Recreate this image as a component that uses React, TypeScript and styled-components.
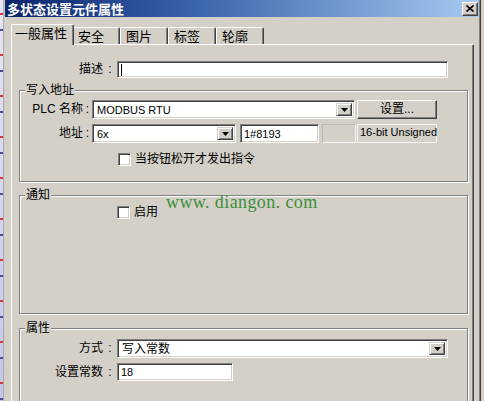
import React from "react";
import styled, { createGlobalStyle, css } from "styled-components";

const GlobalStyle = createGlobalStyle`
  html, body { margin: 0; padding: 0; background: #d4d0c8; }
  body {
    font-family: "Liberation Sans", "Noto Sans CJK SC", sans-serif;
    font-size: 12px;
    color: #000;
    overflow: hidden;
  }
  *, *::before, *::after { box-sizing: border-box; }
`;

const sunken = css`
  background: #fff;
  border: 1px solid;
  border-color: #808080 #fff #fff #808080;
  box-shadow: inset 1px 1px 0 #404040, inset -1px -1px 0 #d4d0c8;
`;

const raised = css`
  background: #d4d0c8;
  border: 1px solid;
  border-color: #fff #404040 #404040 #fff;
  box-shadow: inset -1px -1px 0 #808080;
`;

const Screen = styled.div`
  display: flex;
  width: 484px;
  height: 401px;
  overflow: hidden;
  background: #d4d0c8;
`;

const BackStrip = styled.div`
  flex: none;
  width: 3px;
  background:
    repeating-linear-gradient(
      to bottom,
      transparent 0 13px,
      #d9383a 13px 15px,
      transparent 15px 29px,
      #4a4aa0 29px 31px,
      transparent 31px 41px
    ),
    linear-gradient(to bottom, #e6e6f4, #c4c4ea);
`;

const Window = styled.div`
  flex: none;
  width: 478px;
  height: 100%;
  display: flex;
  flex-direction: column;
  background: #d4d0c8;
  border-left: 1px solid #a8a8a8;
  border-right: 1px solid #404040;
  padding: 0 1px;
  box-shadow: inset -1px 0 0 #808080;
`;

const TitleBar = styled.div`
  flex: none;
  height: 17px;
  display: flex;
  align-items: center;
  justify-content: space-between;
  padding: 0 1px 0 2px;
  background: linear-gradient(to right, #0a246a 0%, #3a64ac 40%, #a6caf0 100%);
`;

const TitleText = styled.span`
  color: #fff;
  font-family: "Noto Sans CJK SC", sans-serif;
  font-weight: bold;
  font-size: 13px;
  line-height: 17px;
`;

const CloseButton = styled.span`
  ${raised}
  width: 16px;
  height: 14px;
  display: flex;
  align-items: center;
  justify-content: center;
`;

const Body = styled.div`
  flex: 1;
  min-height: 0;
  display: flex;
  flex-direction: column;
  padding: 7px 5px 0 6px;
`;

const TabStrip = styled.div`
  flex: none;
  height: 20px;
  display: flex;
  align-items: flex-end;
  position: relative;
  z-index: 1;
`;

const Tab = styled.div<{ $active?: boolean; $w: number }>`
  position: relative;
  z-index: ${(p) => (p.$active ? 2 : 1)};
  flex: none;
  width: ${(p) => p.$w}px;
  height: ${(p) => (p.$active ? 21 : 17)}px;
  margin-bottom: ${(p) => (p.$active ? -1 : 0)}px;
  margin-right: ${(p) => (p.$active ? -2 : 0)}px;
  padding-left: ${(p) => (p.$active ? 3 : 5)}px;
  background: #d4d0c8;
  border-top: 1px solid #fff;
  border-left: 1px solid #fff;
  border-right: 1px solid #404040;
  border-radius: 2px 2px 0 0;
  box-shadow: inset -1px 0 0 #808080;
  font-family: "Noto Sans CJK SC", sans-serif;
  font-size: 13px;
  line-height: 15px;
  white-space: nowrap;
`;

const Panel = styled.div`
  flex: 1;
  display: flex;
  flex-direction: column;
  border-top: 1px solid #fff;
  border-left: 1px solid #fff;
  border-right: 1px solid #404040;
  box-shadow: inset -1px 0 0 #808080;
  padding: 16px 5px 0 7px;
`;

const FieldRow = styled.div<{ $mt?: number; $h?: number }>`
  flex: none;
  display: flex;
  align-items: center;
  height: ${(p) => p.$h ?? 19}px;
  margin-top: ${(p) => p.$mt ?? 0}px;
`;

const Label = styled.span<{ $w: number }>`
  flex: none;
  width: ${(p) => p.$w}px;
  text-align: right;
  white-space: nowrap;
  line-height: 15px;
`;

const Colon = styled.span<{ $w: number }>`
  flex: none;
  width: ${(p) => p.$w}px;
  text-align: center;
  line-height: 15px;
`;

const TextBox = styled.div<{ $w: number; $h?: number; $ml?: number }>`
  ${sunken}
  flex: none;
  width: ${(p) => p.$w}px;
  height: ${(p) => p.$h ?? 19}px;
  margin-left: ${(p) => p.$ml ?? 0}px;
  display: flex;
  align-items: center;
  padding: 0 3px;
  font-size: 11px;
  white-space: nowrap;
`;

const Caret = styled.span`
  width: 1px;
  height: 12px;
  background: #000;
`;

const Combo = styled.div<{ $w: number; $ml?: number }>`
  ${sunken}
  flex: none;
  width: ${(p) => p.$w}px;
  height: 19px;
  margin-left: ${(p) => p.$ml ?? 0}px;
  display: flex;
  align-items: stretch;
  padding: 2px;
`;

const ComboText = styled.span<{ $cjk?: boolean }>`
  flex: 1;
  padding-left: 2px;
  font-size: ${(p) => (p.$cjk ? 12 : 11)}px;
  line-height: 15px;
  white-space: nowrap;
  overflow: hidden;
`;

const DropButton = styled.span`
  flex: none;
  width: 16px;
  display: flex;
  align-items: center;
  justify-content: center;
  background: #d4d0c8;
  border: 1px solid;
  border-color: #d4d0c8 #404040 #404040 #d4d0c8;
  box-shadow: inset 1px 1px 0 #fff, inset -1px -1px 0 #808080;
`;

const PushButton = styled.div<{ $w: number; $ml?: number }>`
  ${raised}
  flex: none;
  width: ${(p) => p.$w}px;
  height: 19px;
  margin-left: ${(p) => p.$ml ?? 0}px;
  display: flex;
  align-items: center;
  justify-content: center;
  line-height: 15px;
`;

const StaticBox = styled.div<{ $w: number; $ml?: number; $light?: boolean }>`
  flex: none;
  width: ${(p) => p.$w}px;
  height: 19px;
  margin-left: ${(p) => p.$ml ?? 0}px;
  border: 1px solid;
  border-color: ${(p) => (p.$light ? "#f4f4f4" : "#bcb8b0 #f4f4f4 #f4f4f4 #bcb8b0")};
  padding: 1px 0 0 2px;
  font-size: 11px;
  line-height: 13px;
  white-space: nowrap;
`;

const CheckBox = styled.span<{ $ml: number }>`
  ${sunken}
  flex: none;
  width: 13px;
  height: 13px;
  margin-left: ${(p) => p.$ml}px;
`;

const CheckLabel = styled.span`
  margin-left: 4px;
  line-height: 15px;
  white-space: nowrap;
`;

const Group = styled.fieldset<{ $mt: number; $h: number }>`
  position: relative;
  flex: none;
  margin: ${(p) => p.$mt}px 0 0 0;
  padding: 0 0 0 5px;
  min-width: 0;
  height: ${(p) => p.$h}px;
  border: 1px solid #808080;
  box-shadow: inset 1px 1px 0 #fff, 1px 1px 0 #fff;
  display: flex;
  flex-direction: column;
`;

const Legend = styled.legend`
  padding: 0 1px;
  margin: 0;
  font-size: 12px;
  line-height: 15px;
  background: #d4d0c8;
`;

const Watermark = styled.span`
  position: absolute;
  left: 146px;
  top: -10px;
  font-family: "Liberation Serif", serif;
  font-size: 18px;
  letter-spacing: 0.4px;
  line-height: 18px;
  color: #3b8f3b;
  white-space: nowrap;
`;

const Arrow = () => (
  <svg width="7" height="4" viewBox="0 0 7 4">
    <path d="M0 0h7L3.5 4z" fill="#000" />
  </svg>
);

const CloseIcon = () => (
  <svg width="8" height="7" viewBox="0 0 8 7">
    <path d="M0.5 0.5L7.5 6.5M7.5 0.5L0.5 6.5" stroke="#000" strokeWidth="1.6" />
  </svg>
);

const tabs = [
  { label: "一般属性", w: 63, active: true },
  { label: "安全", w: 48 },
  { label: "图片", w: 48 },
  { label: "标签", w: 48 },
  { label: "轮廓", w: 48 },
];

export default function App() {
  return (
    <>
      <GlobalStyle />
      <Screen>
        <BackStrip />
        <Window>
          <TitleBar>
            <TitleText>多状态设置元件属性</TitleText>
            <CloseButton>
              <CloseIcon />
            </CloseButton>
          </TitleBar>
          <Body>
            <TabStrip>
              {tabs.map((t) => (
                <Tab key={t.label} $active={t.active} $w={t.w}>
                  {t.label}
                </Tab>
              ))}
            </TabStrip>
            <Panel>
              <FieldRow $h={17}>
                <Label $w={84}>描述</Label>
                <Colon $w={14}>:</Colon>
                <TextBox $w={331} $h={17}>
                  <Caret />
                </TextBox>
              </FieldRow>

              <Group $mt={5} $h={99}>
                <Legend>写入地址</Legend>
                <FieldRow $mt={2}>
                  <Label $w={58}>PLC 名称</Label>
                  <Colon $w={9}>:</Colon>
                  <Combo $w={263}>
                    <ComboText>MODBUS RTU</ComboText>
                    <DropButton>
                      <Arrow />
                    </DropButton>
                  </Combo>
                  <PushButton $w={80} $ml={2}>设置...</PushButton>
                </FieldRow>
                <FieldRow $mt={5}>
                  <Label $w={58}>地址</Label>
                  <Colon $w={9}>:</Colon>
                  <Combo $w={144}>
                    <ComboText>6x</ComboText>
                    <DropButton>
                      <Arrow />
                    </DropButton>
                  </Combo>
                  <TextBox $w={79} $ml={4}>
                    1#8193
                  </TextBox>
                  <StaticBox $w={34} $ml={3} />
                  <StaticBox $w={80} $ml={1} $light>
                    16-bit Unsigned
                  </StaticBox>
                </FieldRow>
                <FieldRow $mt={9} $h={15}>
                  <CheckBox $ml={93} />
                  <CheckLabel>当按钮松开才发出指令</CheckLabel>
                </FieldRow>
              </Group>

              <Group $mt={6} $h={126}>
                <Legend>通知</Legend>
                <Watermark>www. diangon. com</Watermark>
                <FieldRow $mt={2} $h={15}>
                  <CheckBox $ml={92} />
                  <CheckLabel>启用</CheckLabel>
                </FieldRow>
              </Group>

              <Group $mt={7} $h={100}>
                <Legend>属性</Legend>
                <FieldRow $mt={3}>
                  <Label $w={78}>方式</Label>
                  <Colon $w={14}>:</Colon>
                  <Combo $w={331}>
                    <ComboText $cjk>写入常数</ComboText>
                    <DropButton>
                      <Arrow />
                    </DropButton>
                  </Combo>
                </FieldRow>
                <FieldRow $mt={5} $h={18}>
                  <Label $w={78}>设置常数</Label>
                  <Colon $w={14}>:</Colon>
                  <TextBox $w={116} $h={18}>
                    18
                  </TextBox>
                </FieldRow>
              </Group>
            </Panel>
          </Body>
        </Window>
      </Screen>
    </>
  );
}
